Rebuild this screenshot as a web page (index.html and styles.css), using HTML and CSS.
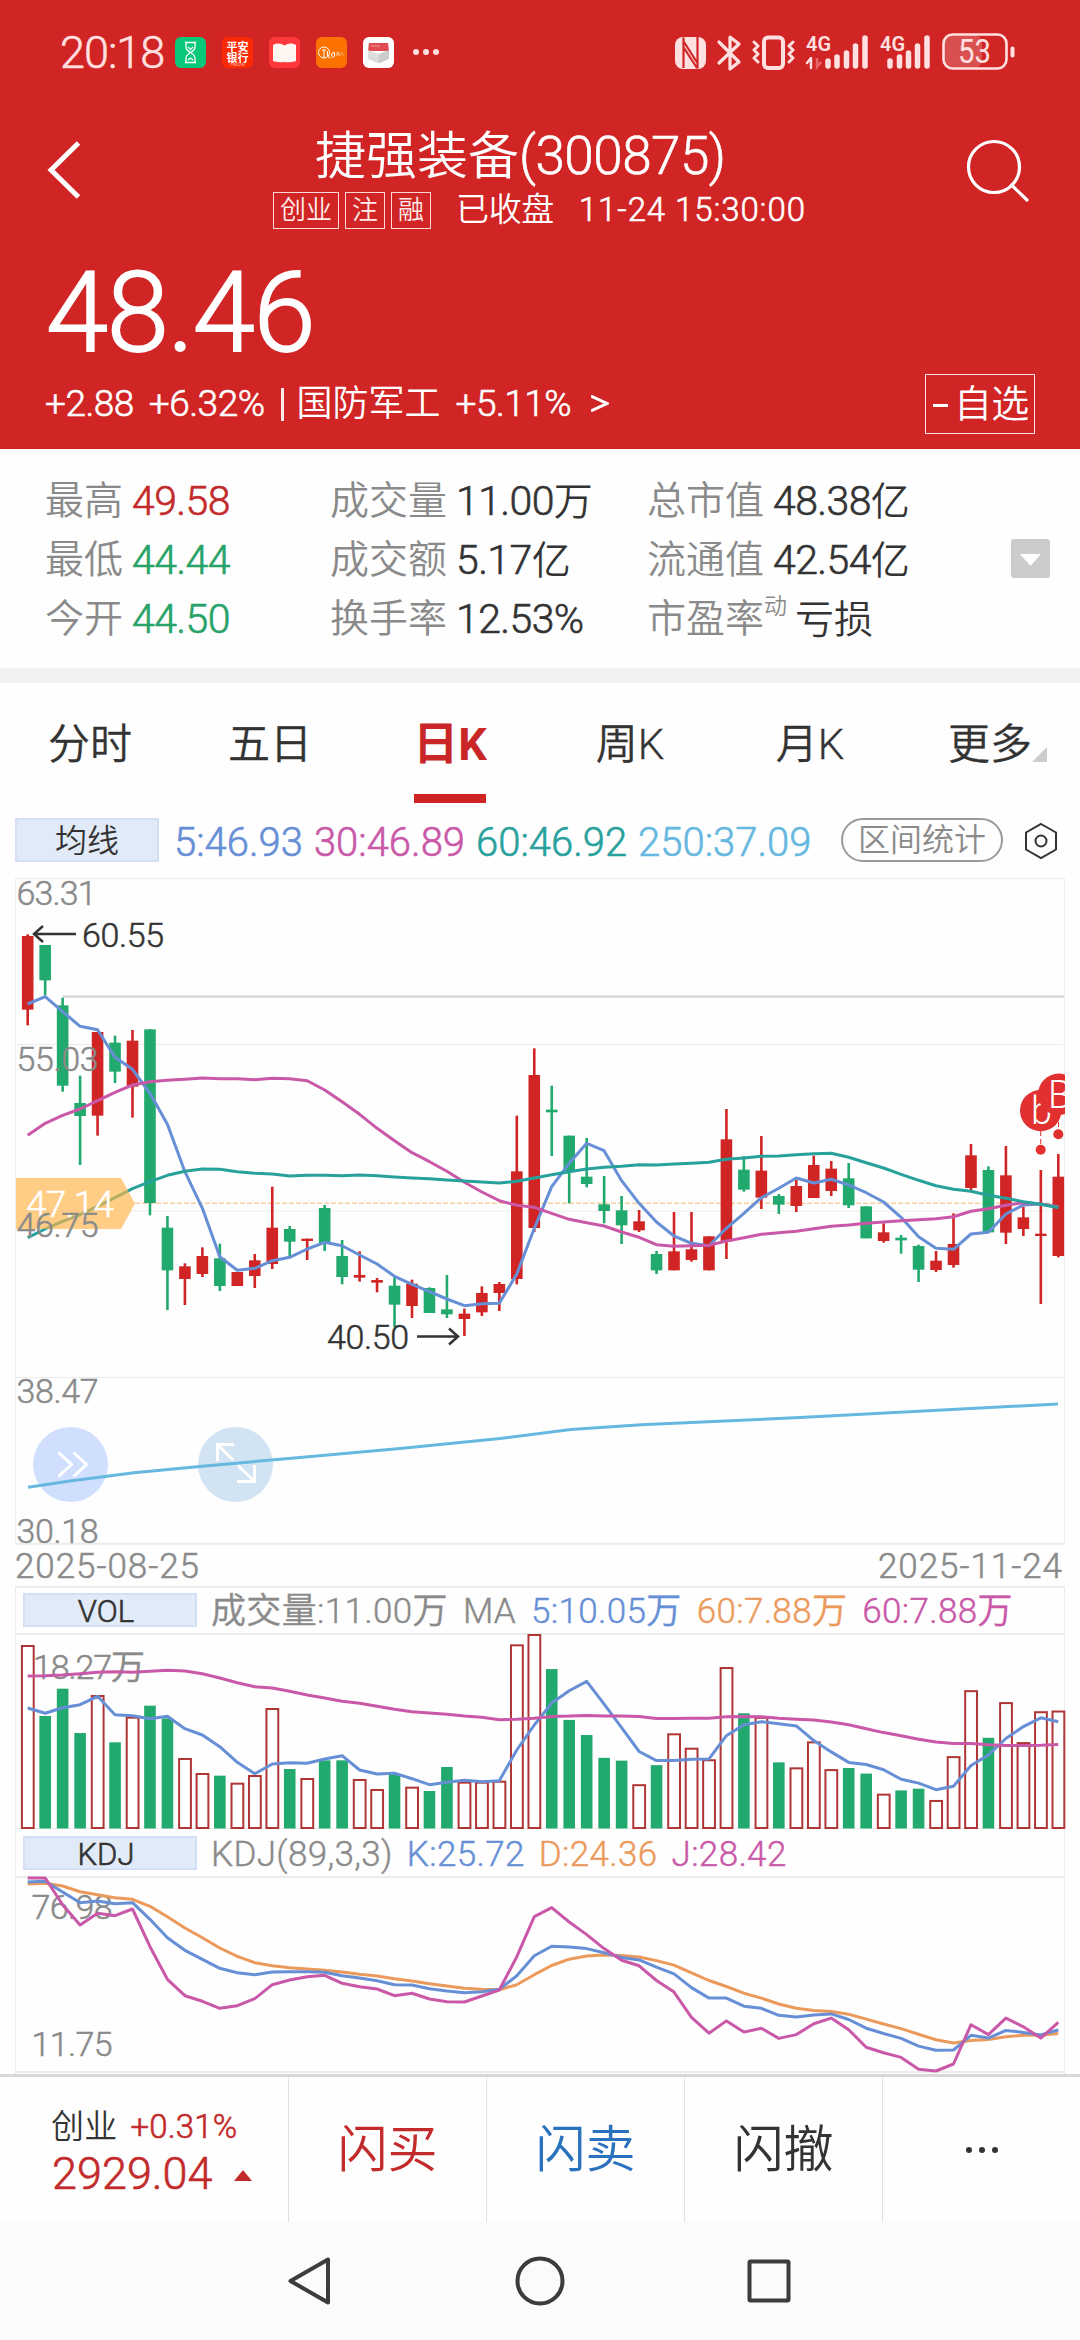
FILE: index.html
```html
<!DOCTYPE html>
<html lang="zh-CN">
<head>
<meta charset="utf-8">
<title>捷强装备(300875)</title>
<link rel="stylesheet" href="styles.css">
</head>
<body>
<header class="hero">
  <div class="status">
    <span class="clock">20:18</span>
    <div class="apps">
      <svg class="app" viewBox="0 0 31 31"><rect width="31" height="31" rx="6" fill="#07c878"/><path d="M10 5.500h11M10 25.500h11M11 6v4q0 3 4.500 5.500Q11 18 11 21.500V25M20 6v4q0 3-4.500 5.500Q20 18 20 21.500V25M13 10l2.500 2.500 2.500-2.500M13 23l2.500-2 2.500 2" fill="none" stroke="#fff" stroke-width="1.300"/></svg>
      <svg class="app" viewBox="0 0 31 31"><rect width="31" height="31" rx="6" fill="#fb2a05"/><text x="15.500" y="14" class="app-name">平安</text><text x="15.500" y="25" class="app-name">银行</text><text x="15.500" y="29" class="app-sub">PINGAN</text></svg>
      <svg class="app" viewBox="0 0 31 31"><rect width="31" height="31" rx="6" fill="#ff383c"/><path d="M4 8Q10 5 15.500 8.500 21 5 27 8V24Q21 26 15.500 25 10 26 4 24z" fill="#fff6f2"/></svg>
      <svg class="app" viewBox="0 0 31 31"><rect width="31" height="31" rx="6" fill="#fb7200"/><circle cx="8" cy="15.500" r="5.500" fill="none" stroke="#fff" stroke-width="1"/><path d="M6 13h4M8 13v8M11.500 14v4q0 3 3 3M18 15q-3 1-2.500 4 1.500 3 3 0 .5-4-.5-4" fill="none" stroke="#fff" stroke-width="1"/><text x="24" y="19" class="app-sub">伟人</text></svg>
      <svg class="app" viewBox="0 0 31 31"><rect width="31" height="31" rx="6" fill="#fff"/><path d="M6 6h19l1 8H5z" fill="#e04a50"/><path d="M5 13l10.500 4v9.500L5 22z" fill="#ddd"/><path d="M26 13l-10.500 4v9.500L26 22z" fill="#ccc"/><path d="M8 9h9" stroke="#f4a0a0"/></svg>
      <svg class="more" viewBox="0 0 28 8"><circle cx="4" cy="4" r="3"/><circle cx="14" cy="4" r="3"/><circle cx="24" cy="4" r="3"/></svg>
    </div>
    <svg class="signals" viewBox="670 30 350 44">
      <rect x="675" y="37" width="31" height="32" rx="8"/>
      <path d="M683.500 37.500V68M697.500 37V68.500M684 42l14 22M684 48l13 20" stroke="#d12425" stroke-width="2.200" fill="none"/>
      <path d="M719 42l20 20-9 7V37l9 7-20 19" class="ln" stroke-width="3.200"/>
      <rect x="764" y="37.500" width="19" height="30.500" rx="4" class="ln" stroke-width="4"/>
      <path d="M754 42l4 4-4 4 4 4-4 4 4 4M793 42l-4 4 4 4-4 4 4 4-4 4" class="ln" stroke-width="3"/>
      <text x="806" y="51" font-size="21" font-weight="600" textLength="25" lengthAdjust="spacingAndGlyphs">4G</text>
      <text x="880" y="51" font-size="21" font-weight="600" textLength="25" lengthAdjust="spacingAndGlyphs">4G</text>
      <path d="M811 68V58l-4 5" class="ln" stroke-width="2.500"/><path d="M817 58v9l4-5" fill="none" stroke="#e8686a" stroke-width="2.500"/>
      <path d="M828 61v5M837 57v9M846.500 53v13M855.500 46v20M865 38v28M890 61v5M899.500 57v9M908.500 53v13M917.500 46v20M927 38v28" class="ln" stroke-width="5.500"/>
      <rect x="944" y="35" width="38" height="33" rx="8" fill="#da5051"/>
      <rect x="943.500" y="34.500" width="63" height="34" rx="9" class="ln" stroke-width="2.600"/>
      <path d="M1012.500 48.500v7" class="ln" stroke-width="4"/>
      <text x="958" y="62.500" font-size="33" font-weight="400" textLength="33" lengthAdjust="spacingAndGlyphs">53</text>
    </svg>
  </div>
  <div class="nav">
    <svg class="back" viewBox="0 0 36 60"><path d="M32.500 3L5 30l27.500 27" fill="none" stroke="#fff" stroke-width="5"/></svg>
    <div class="title-box">
      <h1 class="title">捷强装备<span class="code">(300875)</span></h1>
      <div class="subtitle">
        <span class="tag">创业</span><span class="tag">注</span><span class="tag">融</span>
        <span class="state">已收盘</span><span class="when">11-24 15:30:00</span>
      </div>
    </div>
    <svg class="search" viewBox="0 0 64 64"><circle cx="28" cy="28" r="25.500"/><path d="M45.500 46L61 61"/></svg>
  </div>
  <div class="price">48.46</div>
  <div class="change">
    <span class="chg">+2.88</span><span class="chg pct">+6.32%</span><i class="bar"></i><span class="sector">国防军工</span><span class="chg sec-pct">+5.11%</span>
    <svg class="gt" viewBox="0 0 18 20"><path d="M0 2l16 7.500L0 17"/></svg>
    <button class="watch"><i class="minus"></i>自选</button>
  </div>
</header>

<section class="stats">
  <dl class="col">
    <div><dt>最高</dt><dd class="up">49.58</dd></div>
    <div><dt>最低</dt><dd class="down">44.44</dd></div>
    <div><dt>今开</dt><dd class="down">44.50</dd></div>
  </dl>
  <dl class="col">
    <div><dt>成交量</dt><dd>11.00<b>万</b></dd></div>
    <div><dt>成交额</dt><dd>5.17<b>亿</b></dd></div>
    <div><dt>换手率</dt><dd>12.53%</dd></div>
  </dl>
  <dl class="col">
    <div><dt>总市值</dt><dd>48.38<b>亿</b></dd></div>
    <div><dt>流通值</dt><dd>42.54<b>亿</b></dd></div>
    <div><dt>市盈率<small>动</small></dt><dd class="loss"><b>亏损</b></dd></div>
  </dl>
  <svg class="expand" viewBox="0 0 39 39"><rect width="39" height="39" rx="3" fill="#ccc"/><path d="M9 15h21L19.500 27z" fill="#fff"/></svg>
</section>

<nav class="tabs">
  <a>分时</a><a>五日</a><a class="on">日K</a><a>周K</a><a>月K</a><a class="last">更多<i class="corner"></i></a>
</nav>

<section class="legend">
  <span class="chip ma">均线</span>
  <div class="values"><span class="blue">5:46.93</span><span class="pink">30:46.89</span><span class="teal">60:46.92</span><span class="sky">250:37.09</span></div>
  <span class="pill">区间统计</span>
  <svg class="gear" viewBox="0 0 34 38"><path d="M17 2l15 8.500v17L17 36 2 27.500v-17z"/><circle cx="17" cy="19" r="5.500"/></svg>
</section>

<svg id="kline" class="chart kline" viewBox="0 862 1080 724">
  <defs><clipPath id="frame"><rect x="15" y="870" width="1050" height="680"/></clipPath></defs>
  <g class="grid"><path d="M15.500 1543.500V878.500H1064.500V1543.500M15.500 1044.500H1063M15.500 1211H1064M15.500 1377.500H1064"/><path d="M15 1543.700H1065" stroke-width="2"/></g>
  <path d="M63 996.500H1064" stroke="#e6e6e6" stroke-width="3"/><path d="M63 996.500H1064" stroke="#d2d2d2" stroke-width="1"/>
  <path d="M135 1203.300H1064" stroke="#f7cfa2" stroke-width="1.500" stroke-dasharray="5 2"/>
  <circle cx="70.500" cy="1464.500" r="37.500" fill="#d1dfff"/><circle cx="235.500" cy="1464.500" r="37.500" fill="#d2e4f3"/>
  <g id="candles"></g>
  <g id="averages" class="lines"></g>
  <path d="M28 1487.300L70 1481 134 1472.700 205 1466 300 1457.500 400 1448.500 500 1438.500 571 1429.500 641 1424.700 800 1417.500 1058 1404" fill="none" stroke="#66b8e0" stroke-width="3"/>
  <g fill="none" stroke="#fff" stroke-width="3"><path d="M58.500 1452.500l13 12-13 12M73.500 1452.500l13 12-13 12"/><path d="M217.500 1461v-16.500h16.500M218 1445l15 15M237 1481.500h17.500V1465M254 1481l-16-15.500"/></g>
  <path d="M16 1178H121L135 1203.500 121 1229H16z" fill="#ffb347" fill-opacity=".66"/>
  <text class="tag-price" x="26" y="1217" textLength="88">47.14</text>
  <g class="scale"><text x="16.500" y="905" textLength="80">63.31</text><text x="16.500" y="1071" textLength="82">55.03</text><text x="16.500" y="1237" textLength="82">46.75</text><text x="16.500" y="1403" textLength="82">38.47</text><text x="16.500" y="1542.500" textLength="82">30.18</text></g>
  <g class="note"><text x="82" y="947" textLength="82">60.55</text><text x="327" y="1349" textLength="82">40.50</text><path d="M76 934H34M43 926l-9 8 9 8M417 1336.500H458M449 1328.500l9 8-9 8"/></g>
  <g clip-path="url(#frame)"><g class="mark"><path d="M1040.700 1131v17M1058.500 1114v17"/><circle cx="1040.700" cy="1149.700" r="5"/><circle cx="1058.300" cy="1134.300" r="5"/><circle cx="1040.700" cy="1110.500" r="20.700"/><text x="1031" y="1124">b</text><circle cx="1058.700" cy="1094.300" r="20.700"/><text x="1048" y="1108">B</text></g></g>
  <g class="dates"><text x="15" y="1578" textLength="184">2025-08-25</text><text x="878" y="1578" textLength="184">2025-11-24</text></g>
</svg>

<section class="sub-head top">
  <span class="chip small">VOL</span>
  <div class="sub-values"><span class="gray">成交量:11.00万</span><span class="gray">MA</span><span class="blue">5:10.05万</span><span class="orange">60:7.88万</span><span class="pink">60:7.88万</span></div>
</section>
<svg class="chart vol" viewBox="0 1633 1080 197">
  <path class="grid" d="M15.500 1633V1830M1064.500 1633V1830M15 1828.500H1065"/><path class="grid" d="M15 1634H1065" stroke-width="2"/>
  <g id="volumes"></g>
  <g class="scale"><text x="33" y="1678.500" textLength="112">18.27万</text></g>
  <g id="volume-lines" class="lines"></g>
</svg>

<section class="sub-head">
  <span class="chip small">KDJ</span>
  <div class="sub-values kdj-values"><span class="gray">KDJ(89,3,3)</span><span class="blue">K:25.72</span><span class="orange">D:24.36</span><span class="pink">J:28.42</span></div>
</section>
<svg class="chart kdj" viewBox="0 1876 1080 198">
  <path class="grid" d="M15.500 1876V2074M1064.500 1876V2074"/><path class="grid" d="M15 1877H1065M15 2072H1065" stroke-width="2"/>
  <g class="scale"><text x="31.500" y="1919" textLength="81">76.98</text><text x="31.500" y="2056" textLength="81">11.75</text></g>
  <g id="kdj-lines" class="lines"></g>
</svg>

<footer class="actions">
  <div class="index">
    <div class="index-top"><span>创业</span><span class="up">+0.31%</span></div>
    <div class="index-val">2929.04<i class="tri"></i></div>
  </div>
  <a class="buy">闪买</a><a class="sell">闪卖</a><a>闪撤</a>
  <a><svg class="dots" viewBox="0 0 36 8"><circle cx="5" cy="4" r="3"/><circle cx="18" cy="4" r="3"/><circle cx="31" cy="4" r="3"/></svg></a>
</footer>
<div class="sysnav">
  <svg viewBox="0 0 52 52"><path d="M43 4.500V47.500L5.500 26z"/></svg>
  <svg viewBox="0 0 52 52"><circle cx="26" cy="26" r="22.500"/></svg>
  <svg viewBox="0 0 52 52"><rect x="6.500" y="6.500" width="39" height="39" rx="1"/></svg>
</div>
<script src="chart.js"></script>
</body>
</html>
```
FILE: styles.css
```css
* { box-sizing: border-box; margin: 0; padding: 0; }
body { width: 1080px; height: 2340px; background: #fefefe; color: #333; font-family: Roboto, "Noto Sans CJK SC", sans-serif; font-weight: 350; overflow: hidden; }
svg { display: block; flex: none; }
svg text { font-family: Roboto, "Noto Sans CJK SC", sans-serif; }
i, dt, b { font-style: normal; font-weight: 350; }

/* Numerals sit between the light and regular weights */
.clock, .code, .when, .chg, dd, .values, .sub-values, .index-top .up, .index-val, .small { -webkit-text-stroke: .6px currentColor; }
.scale text, .dates text, .sub-values { -webkit-text-stroke: .4px #8a8a8a; }
.sub-values { -webkit-text-stroke-color: currentColor; }
.sub-values span { -webkit-text-stroke-color: currentColor; }
.values span { -webkit-text-stroke-color: currentColor; }
dd b { -webkit-text-stroke: 0; }

.hero { height: 450px; background: #d12425; color: #fff; border-bottom: 1px solid #fdecec; }
.status { height: 126px; display: flex; align-items: flex-start; padding: 30px 60px 0 60px; color: #ffdfdf; }
.clock { width: 115px; font-size: 45px; line-height: 46px; letter-spacing: -1px; }
.apps { display: flex; gap: 16px; padding-top: 7px; }
.app { width: 31px; height: 31px; }
.app-name { font-size: 11px; font-weight: 700; fill: #fff; text-anchor: middle; }
.app-sub { font-size: 4px; fill: #fff; text-anchor: middle; }
.more { width: 28px; height: 8px; margin: 11px 0 0 2px; fill: #ffdfdf; }
.signals { width: 350px; height: 44px; margin-left: auto; fill: #ffe0e0; }
.signals .ln { fill: none; stroke: #ffe0e0; stroke-linecap: round; stroke-linejoin: round; }

.nav { display: flex; height: 102px; padding: 0 50px 0 46px; }
.back { width: 36px; height: 60px; margin-top: 14px; }
.title-box { margin-left: 191px; }
.title { padding-left: 42px; font-size: 51px; line-height: 60px; font-weight: 350; white-space: nowrap; }
.code { font-size: 53px; letter-spacing: -.5px; }
.subtitle { display: flex; align-items: center; height: 38px; margin-top: 4px; font-size: 33px; line-height: 38px; white-space: nowrap; }
.tag { height: 37px; border: 1px solid #ffd6d6; font-size: 26px; line-height: 35px; padding: 0 6px; margin-right: 6px; color: #ffecec; }
.state { margin-left: 19px; letter-spacing: -.4px; }
.when { margin-left: 25px; letter-spacing: .9px; }
.search { width: 64px; height: 64px; margin: 13px 0 0 auto; fill: none; stroke: #fff; stroke-width: 3.2; stroke-linecap: round; }

.price { padding-left: 46px; margin-top: 29px; font-size: 112px; line-height: 112px; letter-spacing: -1.4px; -webkit-text-stroke: 1.8px #fff; }
.change { display: flex; align-items: center; height: 60px; margin: 5px 45px 0 45px; font-size: 37px; line-height: 60px; letter-spacing: -.5px; }
.pct { margin-left: 15px; }
.bar { width: 3px; height: 33px; background: #ffeaea; margin: 0 13px 0 16px; }
.sector { font-size: 36px; letter-spacing: 0; }
.sec-pct { margin-left: 15px; }
.gt { width: 18px; height: 20px; margin-left: 20px; fill: none; stroke: #fff; stroke-width: 3; }
.watch { margin-left: auto; width: 110px; height: 60px; display: flex; align-items: center; gap: 6px; padding-left: 7px; background: none; border: 1px solid #ffe0e0; color: #fff; font: 350 38px/58px Roboto, "Noto Sans CJK SC", sans-serif; letter-spacing: -.8px; }
.minus { flex: none; width: 15px; height: 3px; background: #fff; margin-top: 3px; }

.stats { position: relative; display: flex; height: 218px; padding: 22px 0 0 45px; }
.col div { display: flex; height: 59px; line-height: 59px; white-space: nowrap; }
.col:nth-child(1) { width: 285px; }
.col:nth-child(2) { width: 317px; }
.col:nth-child(3) { width: 364px; }
.col dt { font-size: 39px; color: #8a8a8a; margin-right: 9px; }
.col dd { font-size: 41px; letter-spacing: -.6px; }
.col b { font-size: 39px; letter-spacing: 0; }
.col small { font-size: 23px; vertical-align: 18px; line-height: 1px; }
.col .loss { margin-left: -1px; }
.up { color: #c32a2b; }
.down { color: #27a268; }
.expand { width: 39px; height: 39px; margin-top: 67px; }

.tabs { display: flex; height: 135px; border-top: 15px solid #f1f1f1; }
.tabs a { position: relative; flex: 1; text-align: center; font-size: 42px; line-height: 123px; height: 120px; }
.tabs a:not(.on) { -webkit-text-stroke: .3px #333; }
.tabs .on { color: #c92727; font-size: 45px; font-weight: 700; }
.tabs .on::after { content: ""; position: absolute; left: 54px; bottom: 0; width: 72px; height: 9px; background: #d02323; }
.corner { position: absolute; left: 132px; top: 64px; border-left: 15px solid transparent; border-bottom: 15px solid #ccc; }

.legend { display: flex; height: 59px; padding: 15px 22px 0 15px; }
.chip { background: #e1eaf7; border: 2px solid #d2dff6; text-align: center; color: #333; }
.ma { width: 144px; height: 44px; font-size: 32px; line-height: 42px; }
.values { display: flex; width: 682px; padding-left: 15px; gap: 11px; font-size: 40px; line-height: 49px; white-space: nowrap; }
.pill { width: 162px; height: 44px; border: 2px solid #999; border-radius: 22px; font-size: 32px; line-height: 41px; color: #8a8a8a; text-align: center; }
.gear { width: 34px; height: 38px; margin: 4px 0 0 21px; fill: none; stroke: #333; stroke-width: 2; }
.blue { color: #668fd6; }
.pink { color: #c958a8; }
.teal { color: #28a19c; }
.sky { color: #66b8e0; }
.orange { color: #eb9a5c; }
.gray { color: #8a8a8a; }

.chart { width: 1080px; }
.kline { height: 724px; }
.vol { height: 197px; }
.kdj { height: 198px; }
.grid { stroke: #ececec; fill: none; }
.scale text { font-size: 34px; fill: #8a8a8a; stroke: #8a8a8a; stroke-width: .5px; }
.note text { font-size: 34px; fill: #333; stroke: #333; stroke-width: .5px; }
.note path { fill: none; stroke: #333; stroke-width: 2.5; }
.dates text { font-size: 35px; fill: #8a8a8a; stroke: #8a8a8a; stroke-width: .5px; }
.tag-price { font-size: 37px; fill: #fff; stroke: #fff; stroke-width: .5px; }
.mark { fill: #e23030; stroke: none; }
.mark path { stroke: #e23030; stroke-width: 1; stroke-dasharray: 5 3; }
.mark text { font-size: 38px; fill: #fff; }
.lines { fill: none; stroke-width: 3; stroke-linejoin: round; }
.rise { fill: #d02425; stroke: none; }
.fall { fill: #22a96d; stroke: none; }
.hollow { fill: #fff; stroke: #b03535; stroke-width: 2; }

.sub-head { display: flex; height: 46px; margin: 0 15px; padding: 6px 0 0 7px; border: 0 solid #ececec; border-width: 0 1px; }
.top { height: 47px; border-top-width: 2px; padding-top: 5px; }
.small { width: 174px; height: 34px; padding-right: 8px; font-size: 31px; line-height: 33px; }
.sub-values { display: flex; gap: 15px; margin-left: 14px; font-size: 35px; line-height: 38px; letter-spacing: .35px; white-space: nowrap; }
.kdj-values { gap: 14px; }

.actions { display: flex; height: 148px; border-top: 3px solid #d8d8d8; }
.actions a { flex: 1; display: flex; align-items: center; justify-content: center; border-left: 1px solid #e2e2e2; font-size: 50px; line-height: 144px; }
.index { width: 288px; padding: 28px 0 0 51px; }
.index-top { display: flex; gap: 13px; font-size: 33px; line-height: 44px; letter-spacing: .2px; }
.index-val { display: flex; align-items: center; margin-left: 1px; font-size: 45px; line-height: 50px; color: #c32a2b; }
.tri { border: 9px solid transparent; border-top: 0; border-bottom: 11px solid #c32a2b; margin: 3px 0 0 21px; }
.actions .buy { color: #c32a2b; }
.actions .sell { color: #2a72bd; }
.dots { width: 36px; height: 8px; fill: #333; }
.sysnav { display: flex; justify-content: center; gap: 177px; height: 118px; padding-top: 33px; background: #fbfbfb; }
.sysnav svg { width: 52px; height: 52px; fill: none; stroke: #3c3c3c; stroke-width: 4; stroke-linejoin: round; }
```
FILE: chart.js
```js
// Day columns are evenly spaced; values are stored in chart units.
const X0 = 27.7, STEP = 17.468;
const x = i => X0 + STEP * i;
const priceY = v => 870 + v / 3;
const lowerY = (v, i) => i < 30 ? 1580 + v / 3 : 1540 + v / 2.851;

// kind, high, body top, body bottom, low
const days = `r 193 198 419 466|g 225 225 331 376|g 383 406 647 665|g 617 699 738 885|r 486 486 737 797|g 497 518 605 639|r 480 512 650 743|g 478 478 999 1036|g 1038 1073 1201 1320|r 1180 1189 1227 1305|r 1132 1158 1212 1221|g 1121 1165 1248 1263|r 1206 1206 1248 1248|r 1152 1171 1218 1254|r 950 1073 1182 1197|g 1068 1077 1115 1162|r 1106 1106 1113 1170|g 1005 1014 1120 1143|g 1110 1158 1221 1243|r 1144 1215 1223 1235|r 1224 1230 1238 1267|g 1222 1247 1304 1371|r 1229 1241 1308 1344|g 1252 1254 1329 1329|g 1215 1318 1333 1344|r 1316 1331 1347 1398|r 1249 1269 1327 1338|r 1236 1242 1269 1323|r 737 904 1227 1243|r 535 615 1074 1086|g 647 719 727 858|g 797 797 906 1000|g 804 920 942 952|g 918 1003 1023 1060|g 978 1021 1066 1122|r 1020 1054 1081 1086|g 1143 1152 1201 1212|r 1026 1144 1201 1201|r 1026 1138 1170 1175|r 1099 1099 1201 1201|r 717 808 1115 1167|g 858 899 959 965|r 798 902 983 1017|g 972 978 1004 1032|r 930 948 1008 1026|r 857 885 984 984|r 873 896 963 978|g 879 925 1006 1014|g 1009 1009 1105 1105|r 1060 1087 1113 1118|g 1095 1103 1111 1151|g 1124 1128 1199 1236|r 1143 1172 1200 1206|r 1030 1122 1185 1193|r 822 856 954 962|g 889 900 1087 1087|r 828 916 1088 1122|r 1010 1042 1077 1098|r 900 1091 1098 1302|r 852 920 1158 1162`.split('|').map(d => d.split(' '));

const ma5 = [402,380,425,469,479,562,598,670,763,905,1015,1160,1201,1195,1172,1162,1137,1117,1127,1155,1182,1219,1243,1265,1287,1307,1301,1300,1212,1075,950,880,820,842,932,1000,1056,1098,1120,1127,1075,1030,983,955,924,939,928,945,968,996,1042,1100,1135,1138,1092,1087,1032,1005,1002,1010];
const ma30 = [796,760,736,717,692,667,645,635,631,628,624,626,626,629,625,626,632,660,695,733,775,812,848,875,904,937,966,992,1006,1012,1030,1048,1058,1068,1086,1102,1124,1129,1127,1126,1113,1103,1093,1088,1084,1076,1069,1065,1060,1056,1052,1049,1046,1040,1024,1016,1006,998,1002,1012];
const ma60 = [1103,1077,1054,1034,1009,983,956,935,916,904,897,898,905,910,912,918,916,916,917,915,917,921,924,926,930,933,936,939,934,924,914,905,897,892,889,884,885,882,880,877,868,864,859,858,854,851,850,862,878,894,913,931,947,958,964,976,985,995,1003,1013];

const volume = [198,408,326,459,348,487,413,377,415,537,582,587,611,588,387,567,597,541,541,600,630,583,623,633,561,608,608,605,196,165,368,513,556,621,629,699,642,554,595,628,365,494,507,634,651,577,656,650,666,726,714,709,744,619,431,564,465,579,491,489];
const vol5 = [384,400,383,374,349,404,407,416,409,446,465,500,547,581,552,548,550,537,527,570,582,580,596,614,607,601,605,602,510,435,465,430,403,468,535,603,629,629,625,624,558,527,518,524,530,572,604,634,640,655,682,693,712,702,643,613,566,532,507,518];
const vol60 = [288,287,285,281,277,275,277,274,271,273,281,294,308,320,324,334,345,354,364,370,379,388,395,399,403,408,412,419,418,415,503,502,500,502,502,503,509,509,508,508,504,503,504,508,511,513,519,527,538,549,558,568,576,580,580,584,586,586,585,583];

const K = [906,904,936,968,963,971,968,1018,1073,1111,1138,1165,1178,1184,1176,1175,1175,1177,1187,1194,1202,1214,1215,1226,1233,1238,1235,1228,1187,1127,1158,1160,1165,1177,1190,1197,1218,1237,1276,1306,1306,1329,1335,1355,1360,1354,1351,1367,1392,1407,1421,1443,1455,1454,1412,1420,1398,1404,1411,1397];
const D = [912,910,918,935,944,953,958,979,1010,1044,1073,1104,1129,1148,1157,1163,1167,1171,1176,1183,1188,1196,1203,1211,1218,1225,1228,1229,1214,1184,1213,1195,1186,1183,1185,1189,1199,1212,1234,1256,1273,1292,1306,1323,1335,1341,1344,1352,1366,1380,1393,1409,1425,1434,1427,1424,1416,1412,1412,1407];
const J = [894,894,974,1035,1000,1007,987,1100,1198,1247,1264,1285,1277,1256,1214,1200,1190,1186,1210,1220,1227,1247,1240,1257,1265,1266,1248,1230,1130,1010,1048,1089,1125,1165,1198,1214,1256,1289,1361,1406,1371,1403,1392,1421,1410,1379,1363,1396,1446,1462,1475,1509,1514,1494,1382,1410,1363,1388,1420,1375];

const line = (data, toY, color) =>
  `<polyline stroke="${color}" points="${data.map((v, i) => x(i).toFixed(1) + ',' + toY(v, i).toFixed(1)).join(' ')}"/>`;
const put = (id, markup) => { document.getElementById(id).innerHTML = markup; };

put('candles', days.map(([kind, ...v], i) => {
  const [high, top, bottom, low] = v.map(n => priceY(+n));
  const cls = kind === 'r' ? 'rise' : 'fall';
  return `<g class="${cls}"><rect x="${x(i) - 1.3}" y="${high}" width="2.6" height="${low - high}"/><rect x="${x(i) - 5.8}" y="${top}" width="11.6" height="${bottom - top}"/></g>`;
}).join(''));
put('averages', line(ma5, priceY, '#668fd6') + line(ma30, priceY, '#c958a8') + line(ma60, priceY, '#28a19c'));

put('volumes', volume.map((v, i) => {
  const top = lowerY(v, i);
  return days[i][0] === 'r'
    ? `<rect class="hollow" x="${x(i) - 5.8}" y="${top}" width="11.8" height="${1828 - top}"/>`
    : `<rect class="fall" x="${x(i) - 5.8}" y="${top}" width="11.6" height="${1828.5 - top}"/>`;
}).join(''));
put('volume-lines', line(vol5, lowerY, '#668fd6') + line(vol60, lowerY, '#c958a8'));
put('kdj-lines', line(D, lowerY, '#eb9a5c') + line(K, lowerY, '#668fd6') + line(J, lowerY, '#c958a8'));
```
